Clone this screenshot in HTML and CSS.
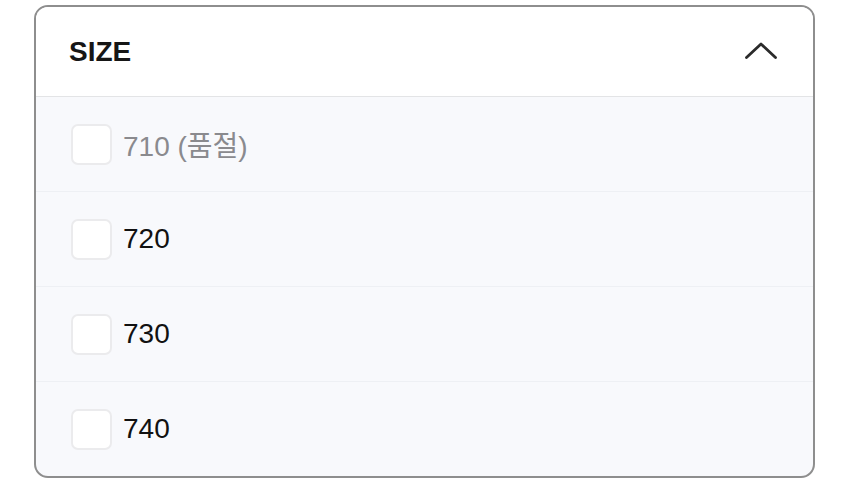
FILE: index.html
```html
<!DOCTYPE html>
<html lang="ko">
<head>
<meta charset="utf-8">
<link rel="stylesheet" href="styles.css">
</head>
<body>
<section class="filter">
  <header class="filter-head">
    <h2 class="filter-title">SIZE</h2>
    <svg class="chevron" width="32" height="17" viewBox="0 0 32 17" aria-hidden="true">
      <path d="M1.5 15.5 L16 2 L30.5 15.5" fill="none" stroke="#2b2b2b" stroke-width="2.8" stroke-linecap="round" stroke-linejoin="round"/>
    </svg>
  </header>
  <ul class="options">
    <li class="option disabled"><span class="box"></span><span class="label">710 (품절)</span></li>
    <li class="option"><span class="box"></span><span class="label">720</span></li>
    <li class="option"><span class="box"></span><span class="label">730</span></li>
    <li class="option"><span class="box"></span><span class="label">740</span></li>
  </ul>
</section>
</body>
</html>
```

FILE: styles.css
```css
html, body {
  margin: 0;
  padding: 0;
  background: #ffffff;
}
body {
  font-family: "Liberation Sans", "Noto Sans CJK KR", sans-serif;
  padding: 5px 0 0 34px;
}
.filter {
  width: 777px;
  height: 469px;
  border: 2px solid #8e8e8e;
  border-radius: 14px;
  overflow: hidden;
  background: #f8f9fc;
  display: flex;
  flex-direction: column;
}
.filter-head {
  height: 89px;
  flex: 0 0 auto;
  background: #ffffff;
  border-bottom: 1px solid #e3e4e6;
  display: flex;
  align-items: center;
  justify-content: space-between;
  padding: 0 36px 0 33px;
}
.filter-title {
  margin: 0;
  font-size: 28px;
  font-weight: 700;
  letter-spacing: 0;
  color: #161616;
}
.chevron {
  display: block;
  margin-top: -2px;
}
.options {
  list-style: none;
  margin: 0;
  padding: 0;
  flex: 1;
  display: flex;
  flex-direction: column;
}
.option {
  flex: 1;
  display: flex;
  align-items: center;
  gap: 11px;
  padding: 0 35px;
  border-top: 1px solid #eef0f4;
}
.option:first-child {
  border-top: none;
}
.box {
  width: 37px;
  height: 37px;
  border: 2px solid #ebebed;
  border-radius: 7px;
  background: #ffffff;
  flex: 0 0 auto;
}
.label {
  font-size: 28px;
  color: #111111;
  letter-spacing: 0;
}
.disabled .label {
  color: #8a8a8e;
}
```
